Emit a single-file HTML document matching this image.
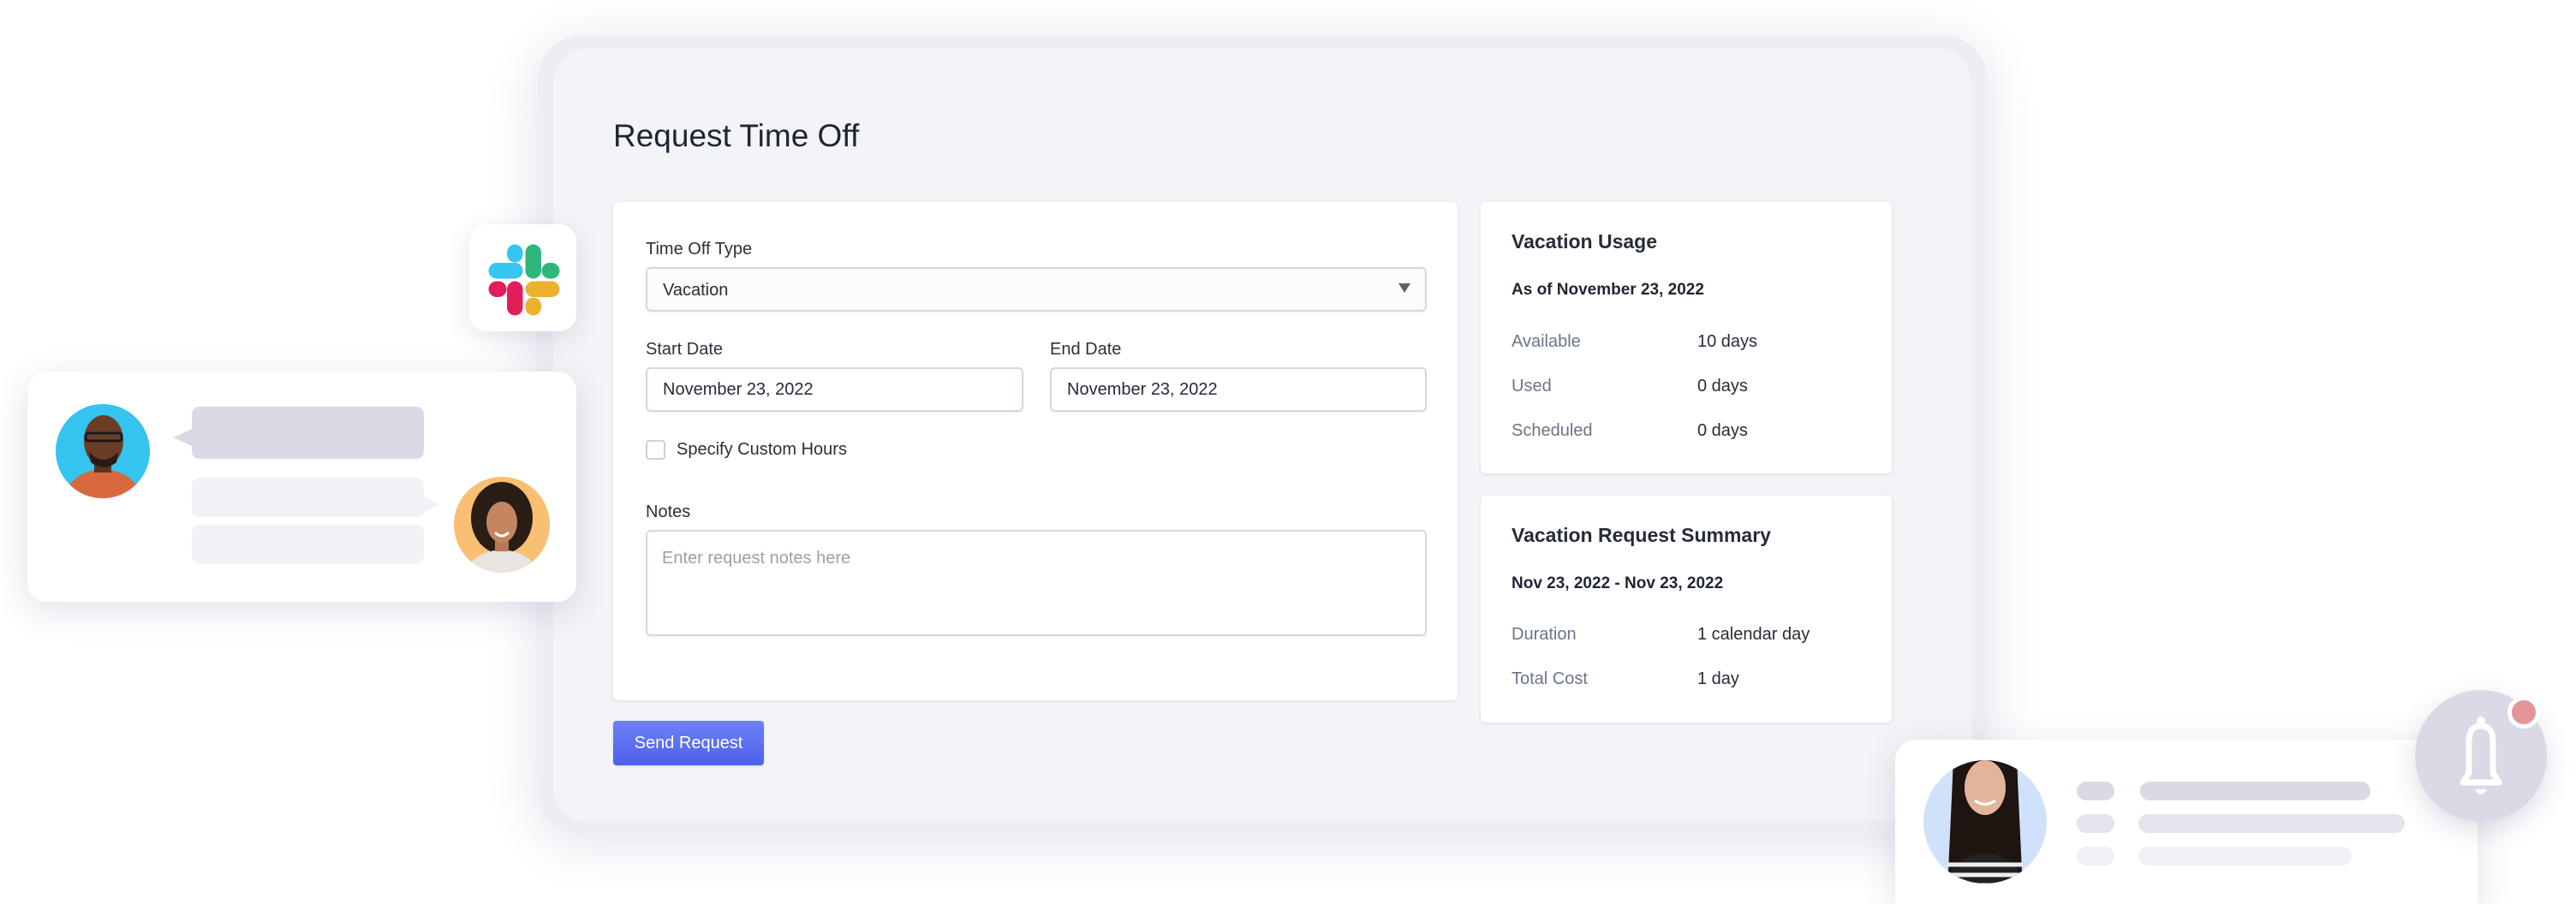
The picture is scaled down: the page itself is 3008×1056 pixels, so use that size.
<!DOCTYPE html>
<html style="overflow:hidden;width:3008px;height:1056px"><head><meta charset="utf-8"><style>
*{margin:0;padding:0;box-sizing:border-box}
html,body{width:3008px;height:1056px;overflow:hidden}
body{background:#fff;font-family:"Liberation Sans",sans-serif;color:#1f2533}
#root{position:relative;width:3008px;height:1056px;overflow:hidden}
.a{position:absolute}
.t{position:absolute;line-height:1;white-space:nowrap}
.card{position:absolute;background:#fff;border-radius:6px;box-shadow:0 1px 4px rgba(40,50,80,0.12)}
.inp{position:absolute;background:#fff;border:2px solid #d3d7de;border-radius:6px;box-shadow:0 2px 2px rgba(0,0,0,0.04)}
.lbl{font-size:20px;color:#2a303c}
.g{font-size:20px;color:#6b7585}
.v{font-size:20px;color:#262c38}
</style></head><body><div id="root">

<div class="a" style="left:628px;top:41px;width:1692px;height:933px;border-radius:52px;background:#eceef3;box-shadow:0 10px 60px rgba(70,80,140,0.16)"></div>
<div class="a" style="left:646px;top:57px;width:1656px;height:902px;border-radius:40px;background:#f3f4f7"></div>

<div class="t" style="left:716px;top:140px;font-size:37px;color:#1f2533">Request Time Off</div>

<div class="card" style="left:716px;top:236px;width:986px;height:582px"></div>
<div class="t lbl" style="left:754px;top:281px">Time Off Type</div>
<div class="inp" style="left:754px;top:312px;width:912px;height:52px;background:#fcfcfd"></div>
<div class="t v" style="left:774px;top:329px">Vacation</div>
<svg class="a" style="left:1633px;top:331px" width="14" height="12"><path d="M0 0H14L7 11Z" fill="#5b6272"/></svg>

<div class="t lbl" style="left:754px;top:398px">Start Date</div>
<div class="t lbl" style="left:1226px;top:398px">End Date</div>
<div class="inp" style="left:754px;top:429px;width:441px;height:52px"></div>
<div class="inp" style="left:1226px;top:429px;width:440px;height:52px"></div>
<div class="t v" style="left:774px;top:445px">November 23, 2022</div>
<div class="t v" style="left:1246px;top:445px">November 23, 2022</div>

<div class="a" style="left:754px;top:514px;width:23px;height:23px;border:2px solid #cdd1d8;border-radius:4px;background:#fff"></div>
<div class="t lbl" style="left:790px;top:515px">Specify Custom Hours</div>

<div class="t lbl" style="left:754px;top:588px">Notes</div>
<div class="inp" style="left:754px;top:619px;width:912px;height:124px"></div>
<div class="t" style="left:773px;top:642px;font-size:20px;color:#9aa1ad">Enter request notes here</div>

<div class="a" style="left:716px;top:842px;width:176px;height:52px;border-radius:4px;background:linear-gradient(#6d82f6,#4c60ea);box-shadow:0 1px 2px rgba(0,0,0,0.15)"></div>
<div class="t" style="left:716px;top:858px;width:176px;text-align:center;font-size:20px;color:#fff">Send Request</div>

<div class="card" style="left:1729px;top:236px;width:480px;height:317px"></div>
<div class="t" style="left:1765px;top:271px;font-size:23px;font-weight:bold;color:#262c38">Vacation Usage</div>
<div class="t" style="left:1765px;top:329px;font-size:19px;font-weight:bold;color:#1f2533">As of November 23, 2022</div>
<div class="t g" style="left:1765px;top:389px">Available</div><div class="t v" style="left:1982px;top:389px">10 days</div>
<div class="t g" style="left:1765px;top:441px">Used</div><div class="t v" style="left:1982px;top:441px">0 days</div>
<div class="t g" style="left:1765px;top:493px">Scheduled</div><div class="t v" style="left:1982px;top:493px">0 days</div>

<div class="card" style="left:1729px;top:579px;width:480px;height:265px"></div>
<div class="t" style="left:1765px;top:614px;font-size:23px;font-weight:bold;color:#262c38">Vacation Request Summary</div>
<div class="t" style="left:1765px;top:672px;font-size:19px;font-weight:bold;color:#1f2533">Nov 23, 2022 - Nov 23, 2022</div>
<div class="t g" style="left:1765px;top:731px">Duration</div><div class="t v" style="left:1982px;top:731px">1 calendar day</div>
<div class="t g" style="left:1765px;top:783px">Total Cost</div><div class="t v" style="left:1982px;top:783px">1 day</div>

<div class="a" style="left:548px;top:262px;width:125px;height:125px;border-radius:20px;background:#fff;box-shadow:0 8px 30px rgba(60,70,120,0.14)"></div>
<svg class="a" style="left:569px;top:284px" width="86" height="86" viewBox="0 0 84 84" stroke-linecap="round" stroke-width="18" fill="none">
<path d="M10.5 31.5H31.5" stroke="#36c5f0"/><path d="M31.5 10.5V13" stroke="#36c5f0"/>
<path d="M52.5 10.5V31.5" stroke="#2eb67d"/><path d="M73.5 31.5H71" stroke="#2eb67d"/>
<path d="M52.5 52.5H73.5" stroke="#ecb22e"/><path d="M52.5 73.5V71" stroke="#ecb22e"/>
<path d="M31.5 52.5V73.5" stroke="#e01e5a"/><path d="M10.5 52.5H13" stroke="#e01e5a"/>
</svg>

<div class="a" style="left:32px;top:434px;width:641px;height:269px;border-radius:22px;background:#fff;box-shadow:0 10px 40px rgba(60,70,120,0.16)"></div>
<svg class="a" style="left:0;top:400px" width="700" height="320">
<defs><clipPath id="c1"><circle cx="120" cy="127" r="55"/></clipPath><clipPath id="c2"><circle cx="586" cy="213" r="56"/></clipPath></defs>
<circle cx="120" cy="127" r="55" fill="#35c3f0"/>
<g clip-path="url(#c1)"><path d="M70 190 Q80 150 120 148 Q160 150 170 190Z" fill="#d9683f"/><rect x="110" y="130" width="20" height="22" fill="#5a3320"/><ellipse cx="121" cy="115" rx="23" ry="30" fill="#6b3d24"/><rect x="100" y="106" width="42" height="9" rx="3" fill="none" stroke="#1a1a1a" stroke-width="3"/><path d="M104 128 Q121 146 138 128 L136 140 Q121 152 106 140Z" fill="#2a1a12"/></g>
<path d="M224 85 Q224 75 234 75 H485 Q495 75 495 85 V126 Q495 136 485 136 H234 Q224 136 224 126 V121 L202 111 L224 101Z" fill="#dadae7"/>
<path d="M224 168 Q224 158 234 158 H485 Q495 158 495 168 V180 L513 189 L495 198 V194 Q495 204 485 204 H234 Q224 204 224 194Z" fill="#f2f2f6"/>
<rect x="224" y="213" width="271" height="46" rx="10" fill="#f2f2f6"/>
<circle cx="586" cy="213" r="56" fill="#f9bf72"/>
<g clip-path="url(#c2)"><ellipse cx="586" cy="205" rx="36" ry="42" fill="#2a1d16"/><path d="M540 280 Q545 245 586 242 Q627 245 632 280Z" fill="#e8e4de"/><rect x="578" y="222" width="16" height="22" fill="#b57a55"/><ellipse cx="586" cy="210" rx="18" ry="24" fill="#c38660"/><path d="M578 222 Q586 230 594 222" stroke="#fff" stroke-width="3" fill="none"/></g>
</svg>

<div class="a" style="left:2213px;top:864px;width:680px;height:192px;border-radius:24px 24px 0 0;background:#fff;box-shadow:0 10px 40px rgba(60,70,120,0.16)"></div>
<svg class="a" style="left:2200px;top:760px" width="808" height="296">
<defs><clipPath id="c3"><circle cx="118" cy="200" r="72"/></clipPath></defs>
<circle cx="118" cy="200" r="72" fill="#cfe1fb"/>
<g clip-path="url(#c3)"><path d="M80 150 Q80 95 118 95 Q156 95 156 150 L162 280 H74Z" fill="#1e1410"/><path d="M70 290 Q72 240 118 236 Q164 240 166 290Z" fill="#222"/><path d="M72 262 H164 M70 274 H166 M74 250 H162" stroke="#eee" stroke-width="5"/><ellipse cx="118" cy="160" rx="24" ry="32" fill="#e2b59a"/><path d="M106 175 Q118 184 130 175" stroke="#fff" stroke-width="3" fill="none"/></g>
<rect x="225" y="153" width="44" height="22" rx="11" fill="#dadae6"/><rect x="299" y="153" width="269" height="22" rx="11" fill="#dadae6"/>
<rect x="225" y="191" width="44" height="22" rx="11" fill="#e4e4ec"/><rect x="297" y="191" width="311" height="22" rx="11" fill="#e4e4ec"/>
<rect x="225" y="229" width="44" height="22" rx="11" fill="#f0f0f5"/><rect x="297" y="229" width="249" height="22" rx="11" fill="#f0f0f5"/>
</svg>
<div class="a" style="left:2820px;top:806px;width:154px;height:154px;border-radius:50%;background:#dadae6;box-shadow:0 10px 30px rgba(60,70,120,0.18)"></div>
<svg class="a" style="left:2820px;top:806px" width="154" height="154">
<path d="M56 108 L63 97 V60 Q63 42 77 42 Q91 42 91 60 V97 L98 108Z" fill="none" stroke="#fff" stroke-width="7" stroke-linejoin="round"/>
<circle cx="77" cy="36" r="5" fill="#fff"/>
<path d="M70 116 Q77 128 84 116Z" fill="#fff"/>
</svg>
<div class="a" style="left:2928px;top:813px;width:38px;height:38px;border-radius:50%;background:#e39597;border:5px solid #fff"></div>

</div></body></html>
